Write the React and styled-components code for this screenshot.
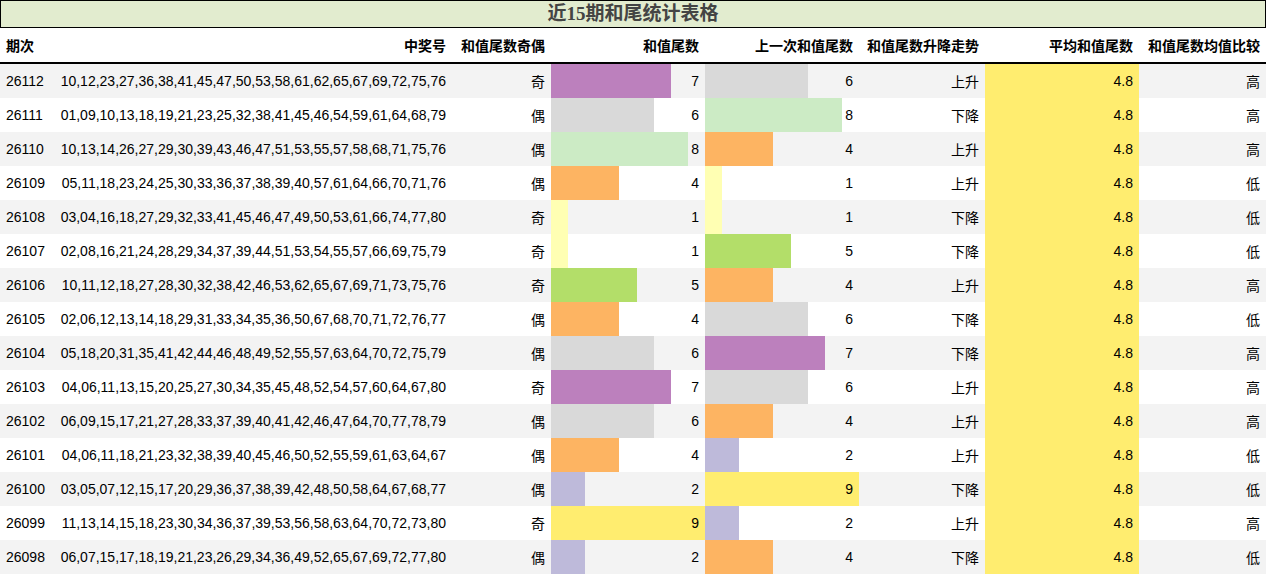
import React from "react";
import styled, { createGlobalStyle } from "styled-components";

const G = createGlobalStyle`
  body { margin: 0; background: #fff; font-family: "Liberation Sans", "Noto Sans CJK SC", sans-serif; }
`;

const raw = `26112|10,12,23,27,36,38,41,45,47,50,53,58,61,62,65,67,69,72,75,76|奇|7|6|上升|高
26111|01,09,10,13,18,19,21,23,25,32,38,41,45,46,54,59,61,64,68,79|偶|6|8|下降|高
26110|10,13,14,26,27,29,30,39,43,46,47,51,53,55,57,58,68,71,75,76|偶|8|4|上升|高
26109|05,11,18,23,24,25,30,33,36,37,38,39,40,57,61,64,66,70,71,76|偶|4|1|上升|低
26108|03,04,16,18,27,29,32,33,41,45,46,47,49,50,53,61,66,74,77,80|奇|1|1|下降|低
26107|02,08,16,21,24,28,29,34,37,39,44,51,53,54,55,57,66,69,75,79|奇|1|5|下降|低
26106|10,11,12,18,27,28,30,32,38,42,46,53,62,65,67,69,71,73,75,76|奇|5|4|上升|高
26105|02,06,12,13,14,18,29,31,33,34,35,36,50,67,68,70,71,72,76,77|偶|4|6|下降|低
26104|05,18,20,31,35,41,42,44,46,48,49,52,55,57,63,64,70,72,75,79|偶|6|7|下降|高
26103|04,06,11,13,15,20,25,27,30,34,35,45,48,52,54,57,60,64,67,80|奇|7|6|上升|高
26102|06,09,15,17,21,27,28,33,37,39,40,41,42,46,47,64,70,77,78,79|偶|6|4|上升|高
26101|04,06,11,18,21,23,32,38,39,40,45,46,50,52,55,59,61,63,64,67|偶|4|2|上升|低
26100|03,05,07,12,15,17,20,29,36,37,38,39,42,48,50,58,64,67,68,77|偶|2|9|下降|低
26099|11,13,14,15,18,23,30,34,36,37,39,53,56,58,63,64,70,72,73,80|奇|9|2|上升|高
26098|06,07,15,17,18,19,21,23,26,29,34,36,49,52,65,67,69,72,77,80|偶|2|4|下降|低`
  .split("\n").map((l) => l.split("|"));

const colors = { 1: "#ffffb3", 2: "#bebada", 4: "#fdb462", 5: "#b3de69", 6: "#d9d9d9", 7: "#bc80bd", 8: "#ccebc5", 9: "#ffed6f" };
const cols = "55px 397px 99px 154px 154px 126px 154px 127px";

const Title = styled.div`
  height: 26px; border: 1px solid #000; background: #e2eccf;
  text-align: center; font: bold 19px/26px "Liberation Serif", "Noto Sans CJK SC", serif; color: #444;
`;
const Row = styled.div`
  display: grid; grid-template-columns: ${cols}; height: 34px;
  background: ${(p) => (p.$alt ? "#f3f3f3" : "#fff")};
`;
const HeadRow = styled(Row)`
  height: 34px; border-bottom: 2px solid #000; font-weight: bold; background: #fff;
`;
const Cell = styled.div`
  display: flex; align-items: center; justify-content: flex-end;
  padding: 0 6px; font-size: 14px; color: #000; white-space: nowrap; overflow: hidden;
  ${(p) => p.$left && "justify-content: flex-start;"}
  ${(p) => p.$bg && `background: ${p.$bg};`}
`;
const BarCell = styled.div`
  position: relative; display: flex; align-items: center; justify-content: flex-end;
  padding: 0 6px; font-size: 14px;
`;
const Bar = styled.div`
  position: absolute; left: 0; top: 0; bottom: 0; background: ${(p) => p.$c};
`;
const Val = styled.span` position: relative; `;

const Bars = ({ v }) => (
  <BarCell>
    <Bar $c={colors[v]} style={{ width: `${(v * 154) / 9}px` }} />
    <Val>{v}</Val>
  </BarCell>
);

export default function App() {
  return (
    <>
      <G />
      <Title>近15期和尾统计表格</Title>
      <HeadRow>
        <Cell $left>期次</Cell><Cell>中奖号</Cell><Cell>和值尾数奇偶</Cell><Cell>和值尾数</Cell>
        <Cell>上一次和值尾数</Cell><Cell>和值尾数升降走势</Cell><Cell>平均和值尾数</Cell><Cell>和值尾数均值比较</Cell>
      </HeadRow>
      {raw.map((r, i) => (
        <Row key={r[0]} $alt={i % 2 === 0}>
          <Cell $left>{r[0]}</Cell>
          <Cell>{r[1]}</Cell>
          <Cell>{r[2]}</Cell>
          <Bars v={+r[3]} />
          <Bars v={+r[4]} />
          <Cell>{r[5]}</Cell>
          <Cell $bg="#ffed6f">4.8</Cell>
          <Cell>{r[6]}</Cell>
        </Row>
      ))}
    </>
  );
}
